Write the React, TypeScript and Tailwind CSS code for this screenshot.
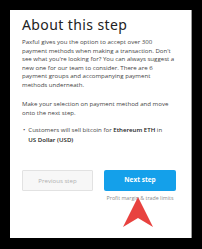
import React from "react";

export default function App() {
  return (
    <div className="w-[202px] h-[249px] bg-black pt-[10px] pl-[10px] overflow-hidden">
      <div className="relative w-[182px] h-[228px] bg-white border-r border-[#9a9a9a] px-[12px] pt-[7px] text-[#444] font-['Open_Sans',sans-serif]">
        <h1 className="text-[14px] leading-[16px] text-[#222] font-['Noto_Sans',sans-serif] tracking-[0.4px]">
          About this step
        </h1>
        <p className="mt-[5px] whitespace-nowrap text-[6.1px] leading-[8.6px]">
          Paxful gives you the option to accept over 300
          <br />
          payment methods when making a transaction. Don't
          <br />
          see what you're looking for? You can always suggest a
          <br />
          new one for our team to consider. There are 6
          <br />
          payment groups and accompanying payment
          <br />
          methods underneath.
        </p>
        <p className="mt-[10.4px] whitespace-nowrap text-[6.1px] leading-[8.6px]">
          Make your selection on payment method and move
          <br />
          onto the next step.
        </p>
        <ul className="mt-[8.3px] whitespace-nowrap text-[6.1px] leading-[10px] flex">
          <li className="flex gap-[3px] pl-[1px]">
            <span>•</span>
            <span>
              Customers will sell bitcoin for <span className="font-semibold text-[#222]">Ethereum ETH</span> in
              <br />
              <span className="font-semibold text-[#222]">US Dollar (USD)</span>
            </span>
          </li>
        </ul>
        <div className="mt-[24.3px] flex gap-[11px]">
          <button className="w-[71px] h-[21px] bg-[#f7f7f7] border border-[#e2e2e2] text-[#b0b0b0] text-[6.1px] rounded-[1px]">
            Previous step
          </button>
          <div className="flex flex-col items-center">
            <button className="w-[72px] h-[21px] bg-[#14a0ea] text-white font-bold text-[6.5px] rounded-[2px]">
              Next step
            </button>
            <span className="mt-[3px] text-[5.3px] leading-[8px] text-[#8a8a8a]">Profit margin &amp; trade limits</span>
          </div>
        </div>
        <svg className="absolute left-[112px] top-[187px]" width="32" height="31" viewBox="0 0 32 31">
          <path d="M16 0 L31 30 L16 21 L1 30 Z" fill="#e8423f" />
        </svg>
      </div>
    </div>
  );
}
